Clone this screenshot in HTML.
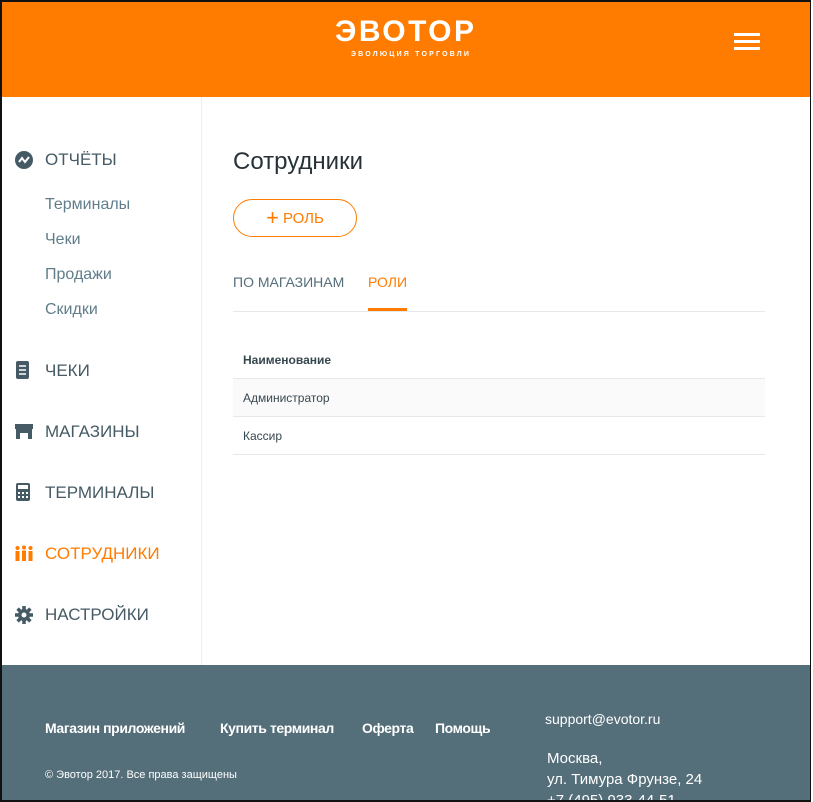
<!DOCTYPE html>
<html><head><meta charset="utf-8"><style>
*{margin:0;padding:0;box-sizing:border-box}
body{width:813px;height:802px;overflow:hidden;background:#fff;font-family:"Liberation Sans","Noto Sans CJK SC",sans-serif;position:relative}
.frame{position:absolute;left:0;top:0;width:811px;height:802px;border:2px solid #111;border-right:1px solid #111;overflow:hidden;background:#fff}
.hdr{position:absolute;left:0;top:0;width:808px;height:95px;background:#ff7c00}
.logo{position:absolute;left:333px;top:12px;color:#fff;font-weight:bold;font-size:30px;letter-spacing:2.5px;line-height:36px}
.logo small{position:absolute;left:16px;top:36px;font-size:7px;letter-spacing:2.2px;white-space:nowrap;line-height:10px}
.burger{position:absolute;left:732px;top:31px;width:26px}
.burger i{display:block;height:3px;background:#fff;margin-bottom:4px}
.side{position:absolute;left:0;top:95px;width:200px;height:568px;border-right:1px solid #eceff1}
.it{position:absolute;left:43px;font-size:17px;color:#455a64}
.sub{position:absolute;left:43px;font-size:16px;color:#607d8b}
.ic{position:absolute;left:13px}
.main h1{position:absolute;left:231px;top:146px;font-size:24px;font-weight:normal;color:#263238}
.btn{position:absolute;left:231px;top:197px;width:124px;height:38px;border:1px solid #ff7c00;border-radius:19px;color:#ff7c00;font-size:15px;text-align:center;line-height:36px}
.btn b{font-weight:normal;font-size:22px;vertical-align:-2px;margin-right:4px}
.tab{position:absolute;top:272px;font-size:14px}
.tline{position:absolute;left:231px;top:309px;width:532px;height:1px;background:#e6e9eb}
.row{position:absolute;left:231px;width:532px;height:38px;border-bottom:1px solid #e6e9eb;font-size:12px;color:#37474f;padding-left:10px;line-height:38px}
.foot{position:absolute;left:0;top:663px;width:808px;height:140px;background:#546e7a;color:#fff}
.fl{position:absolute;top:55px;font-size:14px;font-weight:bold;letter-spacing:-0.4px}
</style></head><body><div class="frame">
<div class="hdr">
<div class="logo">ЭВОТОР<small>ЭВОЛЮЦИЯ ТОРГОВЛИ</small></div>
<div class="burger"><i></i><i></i><i></i></div>
</div>
<div class="side">
<svg class="ic" style="top:54px" width="18" height="18" viewBox="0 0 18 18"><circle cx="9" cy="9" r="9" fill="#455a64"/><path d="M4 11l3-4 3 4 4-5" stroke="#fff" stroke-width="2" fill="none"/></svg>
<div class="it" style="top:53px">ОТЧЁТЫ</div>
<div class="sub" style="top:99px">Терминалы</div>
<div class="sub" style="top:134px">Чеки</div>
<div class="sub" style="top:169px">Продажи</div>
<div class="sub" style="top:204px">Скидки</div>
<svg class="ic" style="top:264px;left:14px" width="13" height="18" viewBox="0 0 13 18"><rect width="13" height="18" rx="2" fill="#455a64"/><path d="M3 5h7M3 9h7M3 13h7" stroke="#fff" stroke-width="1.5"/></svg>
<div class="it" style="top:264px">ЧЕКИ</div>
<svg class="ic" style="top:327px" width="18" height="15" viewBox="0 0 18 15"><rect width="18" height="5" fill="#455a64"/><path d="M1 5h16v10h-4V9H5v6H1z" fill="#455a64"/></svg>
<div class="it" style="top:325px">МАГАЗИНЫ</div>
<svg class="ic" style="top:386px;left:14px" width="14" height="18" viewBox="0 0 14 18"><rect width="14" height="18" rx="2" fill="#455a64"/><rect x="2" y="2" width="10" height="4" fill="#fff"/><path d="M2 9h2v2H2zM6 9h2v2H6zM10 9h2v2h-2zM2 13h2v2H2zM6 13h2v2H6zM10 13h2v2h-2z" fill="#fff"/></svg>
<div class="it" style="top:386px">ТЕРМИНАЛЫ</div>
<svg class="ic" style="top:448px" width="18" height="16" viewBox="0 0 18 16"><g fill="#ff7c00"><circle cx="2.5" cy="3" r="2"/><rect x="0.5" y="6" width="4" height="10"/><circle cx="9" cy="2.5" r="2"/><rect x="7" y="5.5" width="4" height="10.5"/><circle cx="15.5" cy="3" r="2"/><rect x="13.5" y="6" width="4" height="10"/></g></svg>
<div class="it" style="top:447px;color:#ff7c00">СОТРУДНИКИ</div>
<svg class="ic" style="top:509px" width="18" height="18" viewBox="0 0 18 18"><circle cx="9" cy="9" r="6" fill="#455a64"/><g stroke="#455a64" stroke-width="3.5"><path d="M9 0v18M0 9h18M2.6 2.6l12.8 12.8M15.4 2.6L2.6 15.4"/></g><circle cx="9" cy="9" r="2.5" fill="#fff"/></svg>
<div class="it" style="top:508px">НАСТРОЙКИ</div>
</div>
<div class="main">
<h1>Сотрудники</h1>
<div class="btn"><b>+</b>РОЛЬ</div>
<div class="tab" style="left:231px;color:#546e7a">ПО МАГАЗИНАМ</div>
<div class="tab" style="left:366px;color:#ff7c00">РОЛИ</div>
<div style="position:absolute;left:366px;top:306px;width:39px;height:3px;background:#ff7c00"></div>
<div class="tline"></div>
<div class="row" style="top:339px;font-weight:bold;color:#37474f">Наименование</div>
<div class="row" style="top:377px;background:#fafafa">Администратор</div>
<div class="row" style="top:415px">Кассир</div>
</div>
<div class="foot">
<div class="fl" style="left:43px">Магазин приложений</div>
<div class="fl" style="left:218px">Купить терминал</div>
<div class="fl" style="left:360px">Оферта</div>
<div class="fl" style="left:433px">Помощь</div>
<div style="position:absolute;left:43px;top:104px;font-size:11px">© Эвотор 2017. Все права защищены</div>
<div style="position:absolute;left:543px;top:46px;font-size:14px">support@evotor.ru</div>
<div style="position:absolute;left:545px;top:83px;font-size:15px;line-height:21px">Москва,<br>ул. Тимура Фрунзе, 24<br>+7 (495) 933-44-51</div>
</div>
</div></body></html>
